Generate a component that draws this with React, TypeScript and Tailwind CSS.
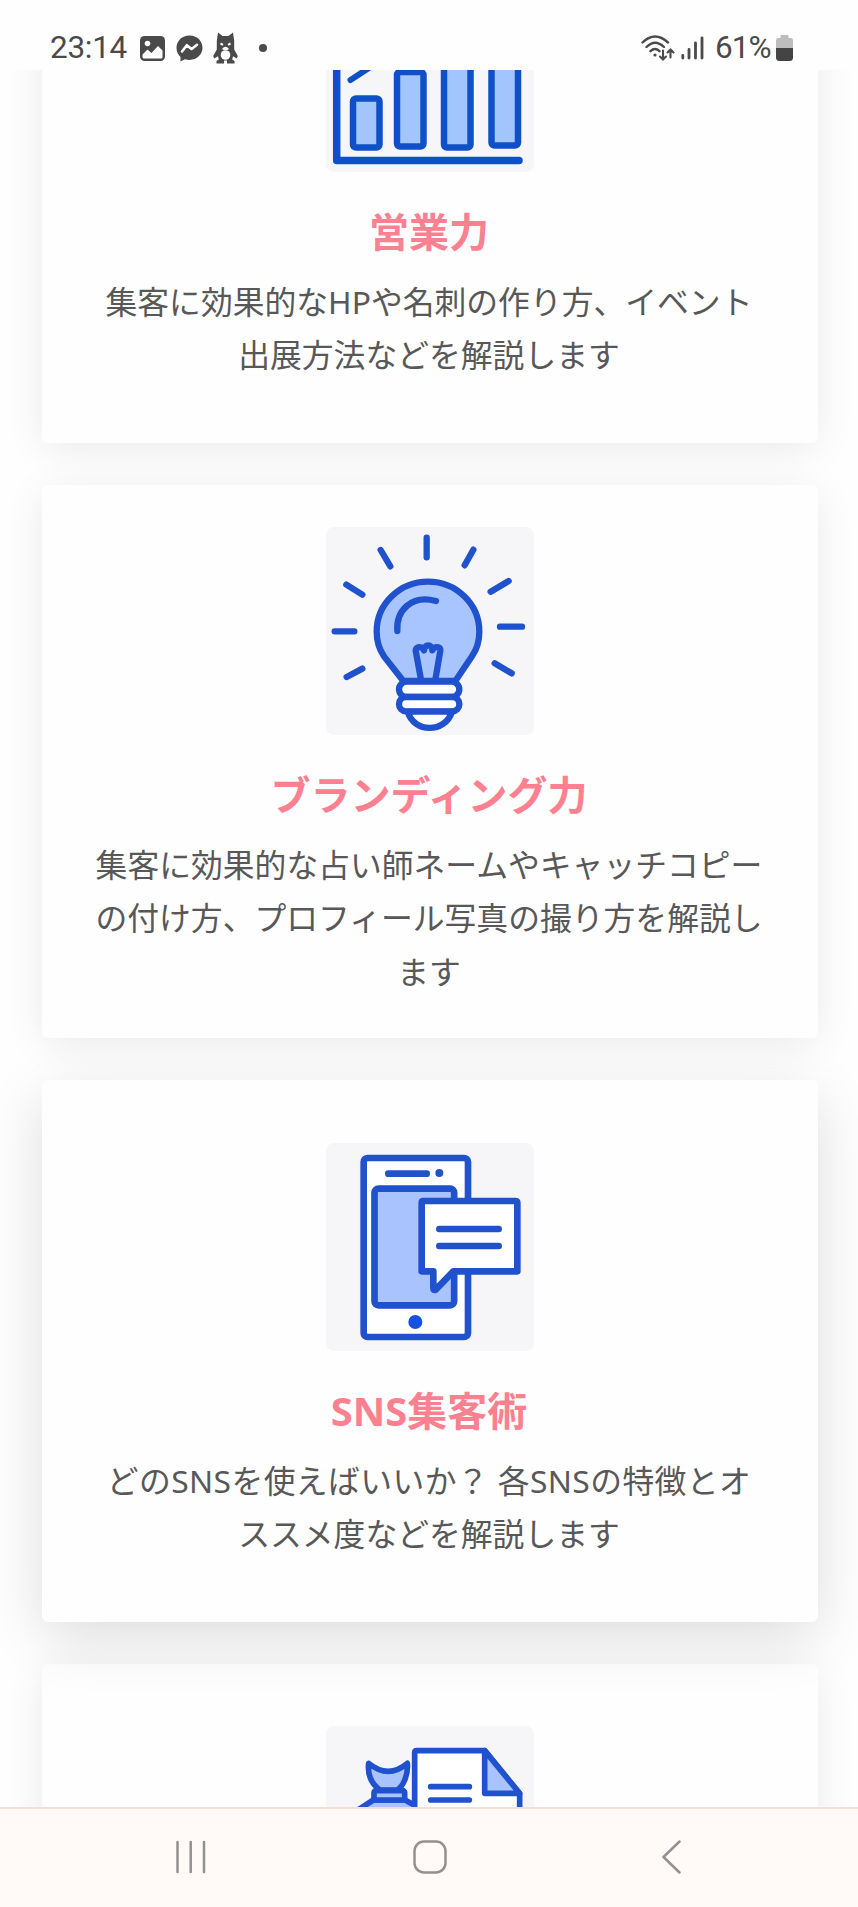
import type { ReactNode } from 'react';

function StatusBar() {
  return (
    <header className="relative z-20 flex h-[70px] shrink-0 items-center justify-between bg-[#fefefe] pt-[27px] pr-[65px] pb-[1px] pl-[50px] text-[#4a4a4a]">
      <div className="flex items-center">
        <span className="w-[90px] text-[31.5px] leading-[40px] tracking-[-0.3px]">23:14</span>
        <svg width="25" height="25" viewBox="0 0 25 25">
          <rect width="25" height="25" rx="4.5" fill="currentColor" />
          <circle cx="7.5" cy="7.5" r="2.8" fill="#fff" />
          <path d="M2.5 18.5 7.5 13.5 11.5 17 18 10 22.5 14.5V21a1.5 1.5 0 0 1-1.5 1.5H4A1.5 1.5 0 0 1 2.5 21Z" fill="#fff" />
        </svg>
        <svg className="ml-[11px]" width="27" height="27" viewBox="0 0 27 27">
          <path d="M13.5 0.5C6 .5.5 6 .5 12.8c0 3.8 1.5 6.9 4 9.1V26.5l4.5-2.2c1.4.4 2.9.6 4.5.6C21 24.9 26.5 19.6 26.5 12.8S21 .5 13.5.5Z" fill="currentColor" />
          <path d="m6 16.5 4.8-6.3 4.8 3.8L21 9.8" fill="none" stroke="#fff" strokeWidth="2.6" strokeLinecap="round" strokeLinejoin="round" />
        </svg>
        <svg className="ml-[10px]" width="25" height="32" viewBox="0 0 25 32">
          <path d="M5 0.5 9.5 4h6L20 .5 21.2 9v8.5L24.8 24l-1 2.5-3.8-2.2-.8 3.200 2.3 1.5V31.5h-7.500v-3h-3v3H3.5V29l2.3-1.5-.8-3.2-3.800 2.2-1-2.5 3.6-6.5V9Z" fill="currentColor" />
          <circle cx="12.5" cy="23" r="4.8" fill="#fff" />
          <path d="M7.5 11.5 10 12.8M17.5 11.5 15 12.8" stroke="#fff" strokeWidth="2" />
          <path d="M9 17q3.5-4.5 7 0-3.5 2.5-7 0Z" fill="#fff" />
        </svg>
        <span className="ml-[21px] size-[8px] rounded-full bg-[#4a4a4a]" />
      </div>
      <div className="flex items-center">
        <svg width="34" height="26" viewBox="0 0 34 26" fill="none" stroke="currentColor" strokeWidth="2.4" strokeLinecap="round">
          <path d="M1.5 7.500Q14 -4.5 27 7.5M5.5 12Q14 3.5 23 12M9.5 16.2Q14 12 18.5 16.2" />
          <circle cx="14" cy="20" r="1.6" fill="currentColor" stroke="none" />
          <path d="M22 15.5V24M19 21.5l3 3 3-3M29.5 22.5V15M26.5 17.5l3-3 3 3" strokeWidth="2.1" />
        </svg>
        <svg className="ml-[6px]" width="23" height="24" viewBox="0 0 23 24" stroke="currentColor" strokeWidth="2.8" strokeLinecap="round">
          <path d="M1.8 19.5V22M8 13.5V22M14.5 7V22M21 1.8V22" />
        </svg>
        <span className="ml-[11px] w-[61px] text-[31.5px] leading-[40px] tracking-[-1px]">61%</span>
        <svg width="17" height="26" viewBox="0 0 17 26">
          <path d="M5.5 0h6a1 1 0 0 1 1 1v2H14.5A2.5 2.5 0 0 1 17 5.5V13H0V5.5A2.5 2.5 0 0 1 2.5 3H4.5V1a1 1 0 0 1 1-1Z" fill="#bdbdbd" />
          <path d="M0 13H17V22.5A3.5 3.5 0 0 1 13.5 26h-10A3.5 3.5 0 0 1 0 22.5Z" fill="#444" />
        </svg>
      </div>
    </header>
  );
}

function ChartIcon() {
  return (
    <svg viewBox="0 0 208 208" className="size-full" fill="none" stroke="#0f50c8" strokeWidth="6.5" strokeLinecap="round" strokeLinejoin="round">
      <path d="M10.7 10V196.5H193" strokeWidth="7.5" />
      <path d="M24.500 116 52 98 92 70" strokeWidth="6" />
      <g fill="#a3c5fd">
        <rect x="27" y="134.5" width="26.500" height="49" rx="3" />
        <rect x="71" y="108" width="26.5" height="74.5" rx="3" />
        <rect x="118" y="70" width="26.5" height="113.5" rx="3" />
        <rect x="165.5" y="40" width="26.5" height="141.5" rx="3" />
      </g>
    </svg>
  );
}

function BulbIcon() {
  return (
    <svg viewBox="48 50 624 624" className="size-full" fill="none" stroke="#2152cd" strokeWidth="19" strokeLinecap="round" strokeLinejoin="round">
      <path d="M350 82V141M212 119 241 168M109 223 157 253M74 363H133M110 500 157 475M490 118 464 165M596 212 542 244M570 349H636M554 459 605 489" />
      <path d="M280 512 222 438Q200 405 200 364A154 150 0 0 1 508 364Q508 405 486 438L436 512Z" fill="#a9c5ff" />
      <path d="M262 362C258 300 305 252 378 272" />
      <path d="M333 508 317 421C317 407 336 407 342 420 343 400 366 400 367 420 373 407 393 407 391 421L376 508" />
      <rect x="267" y="514" width="181" height="46" rx="23" fill="#fff" />
      <rect x="267" y="560" width="181" height="43" rx="21" fill="#fff" />
      <path d="M293 604C312 669 405 669 426 604Z" fill="#fff" />
    </svg>
  );
}

function PhoneIcon() {
  return (
    <svg viewBox="48 37 624 624" className="size-full" fill="none" stroke="#2152cd" strokeWidth="20" strokeLinecap="round" strokeLinejoin="round">
      <rect x="161" y="82" width="313" height="537" rx="12" fill="#fff" />
      <path d="M235 129H350" />
      <circle cx="388" cy="127" r="12" fill="#2152cd" stroke="none" />
      <rect x="193.5" y="174" width="239" height="350" rx="12" fill="#a9c3ff" />
      <circle cx="316" cy="574" r="21" fill="#1550e0" stroke="none" />
      <path d="M340 211H616Q622 211 622 217V422H430L377 477Q370 480 370 472V422H335V216Q335 211 340 211Z" fill="#fff" />
      <path d="M388 295H566M388 346H566" />
    </svg>
  );
}

function MoneyDocumentIcon() {
  return (
    <svg viewBox="78 78 624 624" className="size-full" fill="none" stroke="#2152cd" strokeWidth="17" strokeLinecap="round" strokeLinejoin="round">
      <path d="M120 365 220 300H315L370 330V400H120Z" fill="#a9c3ff" />
      <path d="M206 190Q265 238 322 190C325 225 310 258 292 270H240C215 252 202 225 206 190Z" fill="#a9c3ff" />
      <rect x="222" y="272" width="92" height="28" rx="6" fill="#a9c3ff" />
      <path d="M344 560V158Q344 152 350 152H555L659 281V560Z" fill="#fff" />
      <path d="M554 152V280H659Z" fill="#a9c3ff" />
      <path d="M392 260H508M392 300H508" />
    </svg>
  );
}

type CardProps = {
  icon: ReactNode;
  title?: string;
  lines?: string[];
  className: string;
};

function Card({ icon, title, lines = [], className }: CardProps) {
  return (
    <section className={`flex shrink-0 flex-col items-center rounded-[6px] bg-[#fefefe] ${className}`}>
      <div className="size-[208px] shrink-0 overflow-hidden rounded-[8px] bg-[#f6f6f9]">{icon}</div>
      {title && (
        <h2 className="mt-[32px] pr-[2px] text-[40px] leading-[55px] font-bold text-[#fb8090]">{title}</h2>
      )}
      <p className="mt-[16px] pr-[2px] text-center text-[31.8px] leading-[53.3px] whitespace-nowrap text-[#585858]">
        {lines.map((line) => (
          <span key={line} className={line.includes('SNS') ? 'block tracking-[0.4px]' : 'block'}>{line}</span>
        ))}
      </p>
    </section>
  );
}

function NavBar() {
  return (
    <nav className="relative z-20 flex h-[100px] shrink-0 items-center border-t-2 border-[#f3e0d3] bg-[#fffaf7] pb-[2px] pl-[175px] text-[#929090]">
      <svg width="31" height="34" viewBox="0 0 31 34" stroke="currentColor" strokeWidth="2.5" strokeLinecap="round">
        <path d="M2.5 2V32M15.7 2V32M29 2V32" />
      </svg>
      <svg className="ml-[207px]" width="34" height="34" viewBox="0 0 34 34" fill="none" stroke="currentColor" strokeWidth="2.5">
        <rect x="1.5" y="1.5" width="31" height="31" rx="9.5" />
      </svg>
      <svg className="ml-[214px]" width="21" height="34" viewBox="0 0 21 34" fill="none" stroke="currentColor" strokeWidth="2.5" strokeLinecap="round" strokeLinejoin="round">
        <path d="M18.5 1.5 2.5 17l16 15.5" />
      </svg>
    </nav>
  );
}

export default function App() {
  return (
    <div className="flex h-[1907px] w-[858px] flex-col overflow-hidden bg-[#fefefe] font-[Roboto,'Liberation_Sans',sans-serif]">
      <StatusBar />
      <main
        lang="ja"
        className="flex h-[1737px] shrink-0 flex-col gap-[42px] overflow-hidden pr-[40px] pl-[42px] font-['Noto_Sans','Noto_Sans_CJK_JP',sans-serif]"
      >
        <Card
          className="mt-[-168px] h-[541px] pt-[62px] shadow-[0_6px_42px_-2px_rgba(0,0,0,0.09)]"
          icon={<ChartIcon />}
          title="営業力"
          lines={['集客に効果的なHPや名刺の作り方、イベント', '出展方法などを解説します']}
        />
        <Card
          className="h-[553px] pt-[42px] shadow-[0_6px_42px_-2px_rgba(0,0,0,0.09)]"
          icon={<BulbIcon />}
          title="ブランディング力"
          lines={['集客に効果的な占い師ネームやキャッチコピー', 'の付け方、プロフィール写真の撮り方を解説し', 'ます']}
        />
        <Card
          className="relative z-10 h-[542px] pt-[63px] shadow-[0_16px_60px_-2px_rgba(0,0,0,0.14)]"
          icon={<PhoneIcon />}
          title="SNS集客術"
          lines={['どのSNSを使えばいいか？ 各SNSの特徴とオ', 'ススメ度などを解説します']}
        />
        <Card
          className="h-[542px] pt-[62px] shadow-[0_6px_42px_-2px_rgba(0,0,0,0.09)]"
          icon={<MoneyDocumentIcon />}
        />
      </main>
      <NavBar />
    </div>
  );
}
